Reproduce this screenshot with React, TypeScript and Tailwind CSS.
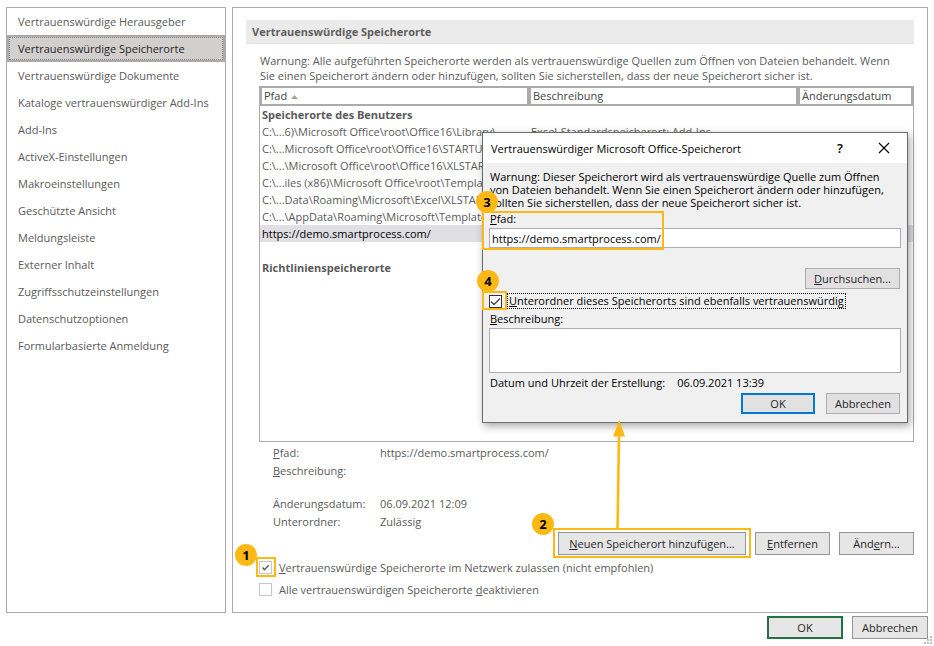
import type { ComponentProps, ReactNode } from "react";
import clsx from "clsx";

const categories = [
  "Vertrauenswürdige Herausgeber",
  "Vertrauenswürdige Speicherorte",
  "Vertrauenswürdige Dokumente",
  "Kataloge vertrauenswürdiger Add-Ins",
  "Add-Ins",
  "ActiveX-Einstellungen",
  "Makroeinstellungen",
  "Geschützte Ansicht",
  "Meldungsleiste",
  "Externer Inhalt",
  "Zugriffsschutzeinstellungen",
  "Datenschutzoptionen",
  "Formularbasierte Anmeldung",
];

const locations = [
  { path: "C:\\...6)\\Microsoft Office\\root\\Office16\\Library\\", description: "Excel-Standardspeicherort: Add-Ins" },
  { path: "C:\\...Microsoft Office\\root\\Office16\\STARTUP\\", description: "" },
  { path: "C:\\...\\Microsoft Office\\root\\Office16\\XLSTART\\", description: "" },
  { path: "C:\\...iles (x86)\\Microsoft Office\\root\\Templates\\", description: "" },
  { path: "C:\\...Data\\Roaming\\Microsoft\\Excel\\XLSTART\\", description: "" },
  { path: "C:\\...\\AppData\\Roaming\\Microsoft\\Templates\\", description: "" },
  { path: "https://demo.smartprocess.com/", description: "", selected: true },
];

function Button({ className, ...props }: ComponentProps<"button">) {
  return (
    <button
      type="button"
      className={clsx("flex items-center justify-center whitespace-nowrap text-[#262626]", className)}
      {...props}
    />
  );
}

function Checkbox({ className, checkClass, ...props }: ComponentProps<"input"> & { checkClass?: string }) {
  return (
    <span className="relative flex size-[13px] shrink-0">
      <input type="checkbox" className={clsx("peer size-[13px] appearance-none border bg-white", className)} {...props} />
      <svg
        viewBox="0 0 13 13"
        className={clsx("pointer-events-none absolute inset-0 hidden peer-checked:block", checkClass)}
        fill="none"
        stroke="currentColor"
      >
        <path d={checkClass ? "M2 6.5l3 3L11 3.5" : "M3.5 6.5l2 2.2L9.7 4.3"} strokeWidth="1.4" />
      </svg>
    </span>
  );
}

// Numbered yellow step marker
function Step({ n, className }: { n: number; className: string }) {
  return (
    <span
      className={clsx(
        "absolute z-10 flex size-[22px] items-center justify-center rounded-full bg-[#fdb913] text-[13px] leading-none font-bold text-black",
        className
      )}
    >
      {n}
    </span>
  );
}

function Frame({ className }: { className: string }) {
  return <span className={clsx("pointer-events-none absolute border-2 border-[#fdb913]", className)} />;
}

function Detail({ label, children }: { label: ReactNode; children?: ReactNode }) {
  return (
    <div className="flex h-[18px] items-center">
      <dt className="w-[107px]">{label}</dt>
      <dd>{children}</dd>
    </div>
  );
}

function LocationDialog() {
  return (
    <div
      role="dialog"
      aria-labelledby="dialog-title"
      className="absolute top-[124px] right-[19px] z-20 w-[426px] border border-[#6b6b6b] bg-[#f0f0f0] text-black shadow-[2px_3px_8px_rgba(0,0,0,0.35)]"
    >
      <div className="flex h-[30px] items-center bg-white pr-[17px] pl-2">
        <h2 id="dialog-title" className="flex-1">Vertrauenswürdiger Microsoft Office-Speicherort</h2>
        <button type="button" aria-label="Hilfe" className="w-3 text-[13px] font-semibold">?</button>
        <button type="button" aria-label="Schließen" className="ml-8">
          <svg className="size-3" viewBox="0 0 12 12" stroke="currentColor" strokeWidth="1.1">
            <path d="M1 1l10 10M11 1L1 11" />
          </svg>
        </button>
      </div>

      <form className="px-[6px] pt-[7px] pb-2">
        <p className="px-px leading-[13px] whitespace-nowrap">
          Warnung: Dieser Speicherort wird als vertrauenswürdige Quelle zum Öffnen
          <br />
          von Dateien behandelt. Wenn Sie einen Speicherort ändern oder hinzufügen,
          <br />
          sollten Sie sicherstellen, dass der neue Speicherort sicher ist.
        </p>

        <div className="relative pt-[2px]">
          <label htmlFor="path" className="block px-px leading-4"><u>P</u>fad:</label>
          <input
            id="path"
            type="text"
            defaultValue="https://demo.smartprocess.com/"
            className="mt-px block h-5 w-full border border-[#abadb3] bg-white px-[2px]"
          />
          <Frame className="top-[2px] -left-[7px] h-[39px] w-[182px]" />
          <Step n={3} className="-top-[18px] -left-[13px]" />
        </div>

        <div className="mt-5 flex justify-end pr-px">
          <Button className="h-[21px] w-[95px] border border-[#adadad] bg-[#e1e1e1]">
            <span><u>D</u>urchsuchen...</span>
          </Button>
        </div>

        <div className="relative mt-1 flex items-center gap-[5px]">
          <Checkbox id="subfolders" defaultChecked className="border-[#333]" checkClass="text-[#444]" />
          <label htmlFor="subfolders" className="border border-dotted border-black px-px leading-[14px]">
            <u>U</u>nterordner dieses Speicherorts sind ebenfalls vertrauenswürdig
          </label>
          <Frame className="-top-[2px] -left-[7px] h-[19px] w-[25px]" />
          <Step n={4} className="-top-[23px] -left-3" />
        </div>

        <label htmlFor="description" className="mt-[2px] block px-px leading-4"><u>B</u>eschreibung:</label>
        <textarea id="description" className="mt-px block h-[45px] w-full resize-none border border-[#abadb3] bg-white px-[2px]" />

        <p className="mt-[2px] flex gap-3 px-px leading-4">
          <span>Datum und Uhrzeit der Erstellung:</span>
          <span>06.09.2021 13:39</span>
        </p>

        <div className="mt-[2px] flex justify-end gap-[11px] pr-px">
          <Button className="h-[21px] w-[74px] border-2 border-[#0078d7] bg-[#e1e1e1]">OK</Button>
          <Button className="h-[21px] w-[74px] border border-[#adadad] bg-[#e1e1e1]">Abbrechen</Button>
        </div>
      </form>
    </div>
  );
}

export default function App() {
  return (
    <div className="relative min-h-screen bg-white px-[6px] pt-[7px] font-['Open_Sans','Noto_Sans',sans-serif] text-[11px] leading-[15px] text-[#5a5a5a]">
      <div className="flex gap-[6px]">
        <nav className="w-[220px] shrink-0 border border-[#ababab]">
          <ul>
            {categories.map((name, i) => (
              <li key={name}>
                <a
                  href="#"
                  className={clsx(
                    "flex h-[27px] items-center whitespace-nowrap",
                    i === 1
                      ? "border-2 border-[#ababab] bg-[#d2d0ce] px-[9px] text-[#262626] outline outline-dotted -outline-offset-3 outline-[#808080]"
                      : "px-[11px]"
                  )}
                >
                  {name}
                </a>
              </li>
            ))}
          </ul>
        </nav>

        <main className="relative min-w-0 flex-1 border border-[#ababab] px-[13px] pt-3 pb-3">
          <h1 className="flex h-6 items-center border-b border-[#e1e1e1] bg-[#ebebeb] px-[6px] font-bold text-[#5f5f5f]">
            Vertrauenswürdige Speicherorte
          </h1>

          <div className="pt-[9px] pl-[13px]">
            <p className="mb-[3px] px-px whitespace-nowrap">
              Warnung: Alle aufgeführten Speicherorte werden als vertrauenswürdige Quellen zum Öffnen von Dateien behandelt. Wenn
              <br />
              Sie einen Speicherort ändern oder hinzufügen, sollten Sie sicherstellen, dass der neue Speicherort sicher ist.
            </p>

            <div className="min-h-[356px] border border-[#ababab]">
              <table className="w-full table-fixed border-separate border-spacing-0 text-left whitespace-nowrap">
                <thead>
                  <tr className="h-[19px] text-[#444]">
                    <th className="w-[269px] border-2 border-t border-[#ababab] px-[2px] py-0 leading-4 font-normal">
                      Pfad
                      <svg className="mb-px ml-1 inline h-[4px] w-[7px]" viewBox="0 0 7 4">
                        <path d="M0 4L3.5 0 7 4z" fill="#a5a598" />
                      </svg>
                    </th>
                    <th className="w-[269px] border-2 border-t border-[#ababab] px-[2px] py-0 leading-4 font-normal">Beschreibung</th>
                    <th className="border-2 border-t border-[#ababab] px-[2px] py-0 leading-4 font-normal">Änderungsdatum</th>
                  </tr>
                </thead>
                <tbody>
                  <tr className="h-[17px]">
                    <th colSpan={3} className="px-[2px] py-0 font-bold">Speicherorte des Benutzers</th>
                  </tr>
                  {locations.map((loc) => (
                    <tr key={loc.path} className={clsx("h-[17px]", loc.selected && "bg-[#e0dfe4] text-black")}>
                      <td className="overflow-hidden px-[2px] py-0">{loc.path}</td>
                      <td className="px-[2px] py-0">{loc.description}</td>
                      <td />
                    </tr>
                  ))}
                  <tr className="h-[17px]">
                    <td colSpan={3} />
                  </tr>
                  <tr className="h-[17px]">
                    <th colSpan={3} className="px-[2px] py-0 font-bold">Richtlinienspeicherorte</th>
                  </tr>
                </tbody>
              </table>
            </div>

            <dl className="pt-px pl-[14px]">
              <Detail label={<><u>P</u>fad:</>}>https://demo.smartprocess.com/</Detail>
              <Detail label={<><u>B</u>eschreibung:</>} />
              <div className="h-[15px]" />
              <Detail label="Änderungsdatum:">06.09.2021 12:09</Detail>
              <Detail label="Unterordner:">Zulässig</Detail>
            </dl>

            <div className="mt-[2px] flex justify-end gap-[9px]">
              <div className="relative">
                <Button className="h-[23px] w-[188px] border border-[#959595] bg-[#e6e6e6]">
                  <span><u>N</u>euen Speicherort hinzufügen...</span>
                </Button>
                <Frame className="-top-1 -left-[5px] h-[30px] w-[198px]" />
                <Step n={2} className="-top-[19px] -left-[26px]" />
                <svg className="absolute -top-[112px] left-[54px] z-30 h-[110px] w-[14px]" viewBox="0 0 14 110">
                  <path d="M5.5 110L7 14" stroke="#fdb913" strokeWidth="2.6" />
                  <path d="M7.3 0L13 16.5H1z" fill="#fdb913" />
                </svg>
              </div>
              <Button className="h-[23px] w-[75px] border border-[#959595] bg-[#e6e6e6]">
                <span><u>E</u>ntfernen</span>
              </Button>
              <Button className="h-[23px] w-[75px] border border-[#959595] bg-[#e6e6e6]">
                <span>Änd<u>e</u>rn...</span>
              </Button>
            </div>

            <div className="relative mt-px flex h-[22px] items-center gap-[7px]">
              <Checkbox id="network" defaultChecked className="border-[#c6c6c6]" />
              <label htmlFor="network"><u>V</u>ertrauenswürdige Speicherorte im Netzwerk zulassen (nicht empfohlen)</label>
              <Frame className="top-px -left-[3px] size-[20px]" />
              <Step n={1} className="-top-3 -left-6" />
            </div>
            <div className="flex h-[22px] items-center gap-[7px]">
              <Checkbox id="disable" className="border-[#c6c6c6]" />
              <label htmlFor="disable">Alle vertrauenswürdigen Speicherorte <u>d</u>eaktivieren</label>
            </div>
          </div>

          <LocationDialog />
        </main>
      </div>

      <footer className="mt-[3px] flex justify-end gap-[9px]">
        <Button className="h-[23px] w-[76px] border-2 border-[#217346] bg-[#e6e6e6]">OK</Button>
        <Button className="h-[23px] w-[76px] border border-[#959595] bg-[#e6e6e6]">Abbrechen</Button>
      </footer>

      <svg className="absolute right-[2px] bottom-[2px] size-2" viewBox="0 0 8 8" fill="#bfbfbf">
        <path d="M6 0h2v2H6zM3 3h2v2H3zM6 3h2v2H6zM0 6h2v2H0zM3 6h2v2H3zM6 6h2v2H6z" />
      </svg>
    </div>
  );
}
